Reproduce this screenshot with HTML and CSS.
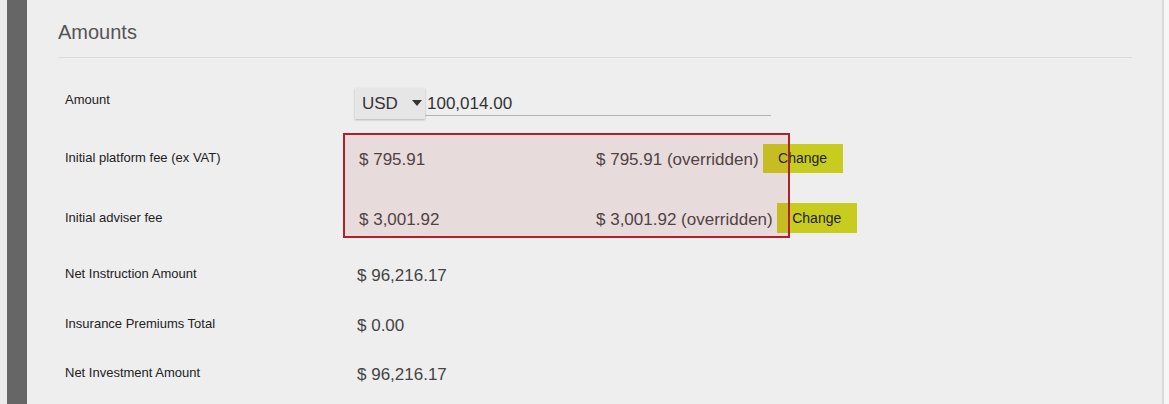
FILE: index.html
```html
<!DOCTYPE html>
<html>
<head>
<meta charset="utf-8">
<link rel="stylesheet" href="styles.css">
</head>
<body>
<div class="page">
  <div class="edge"></div>
  <div class="rail"></div>
  <main class="panel">
    <h2 class="title">Amounts</h2>
    <div class="rows">
      <div class="row row-amount">
        <div class="label">Amount</div>
        <div class="value amount-field">
          <div class="select">
            <span>USD</span>
            <svg class="caret" width="10" height="6" viewBox="0 0 10 6"><path d="M0 0H10L5 6Z" fill="#333"/></svg>
          </div>
          <div class="input">100,014.00</div>
        </div>
      </div>
      <div class="row row-fee1">
        <div class="label">Initial platform fee (ex VAT)</div>
        <div class="value fee">
          <span class="fee-default">$ 795.91</span>
          <span class="fee-over">$ 795.91 (overridden)</span>
          <button class="change">Change</button>
        </div>
      </div>
      <div class="row row-fee2">
        <div class="label">Initial adviser fee</div>
        <div class="value fee">
          <span class="fee-default">$ 3,001.92</span>
          <span class="fee-over">$ 3,001.92 (overridden)</span>
          <button class="change">Change</button>
        </div>
      </div>
      <div class="row row-net">
        <div class="label">Net Instruction Amount</div>
        <div class="value">$ 96,216.17</div>
      </div>
      <div class="row row-ins">
        <div class="label">Insurance Premiums Total</div>
        <div class="value">$ 0.00</div>
      </div>
      <div class="row row-inv">
        <div class="label">Net Investment Amount</div>
        <div class="value">$ 96,216.17</div>
      </div>
    </div>
    <div class="highlight"></div>
  </main>
  <div class="rborder"></div>
  <div class="redge"></div>
</div>
</body>
</html>
```

FILE: styles.css
```css
html, body {
  margin: 0;
  padding: 0;
  height: 404px;
  overflow: hidden;
  background: #f4f4f4;
  font-family: "Liberation Sans", Arial, sans-serif;
}

.page {
  display: flex;
  height: 404px;
}

.edge {
  width: 7px;
  background: #ebebeb;
}

.rail {
  width: 20px;
  background: #666666;
}

.panel {
  flex: 1;
  position: relative;
  background: #eeeeee;
  padding: 18px 30px 0 31px;
}

.rborder {
  width: 2px;
  background: #dadada;
}

.redge {
  width: 5px;
  background: #f6f6f6;
}

.title {
  margin: 0;
  font-size: 20px;
  line-height: 28px;
  font-weight: normal;
  color: #555555;
  padding-bottom: 11px;
  border-bottom: 1px solid #dcdcdc;
}

.rows {
  padding: 20px 0 0 7px;
}

.row {
  display: flex;
  align-items: center;
}

.row-amount { height: 50px; }
.row-fee1 { height: 60px; margin-top: 2px; }
.row-fee2 { height: 60px; }
.row-net { height: 52px; }
.row-ins { height: 48px; }
.row-inv { height: 50px; }

.label {
  width: 290px;
  flex: none;
  font-size: 13px;
  color: #222222;
  margin-bottom: 5px;
}

.row-amount .label {
  margin-bottom: 7px;
}

.value {
  font-size: 17px;
  color: #444444;
  padding-left: 2px;
}

.amount-field {
  display: flex;
  align-items: stretch;
  padding-left: 0;
}

.select {
  width: 70px;
  height: 31px;
  box-sizing: border-box;
  display: flex;
  align-items: center;
  padding: 2px 0 0 7px;
  background: #e6e6e6;
  box-shadow: 0 1px 2px rgba(0, 0, 0, 0.25);
  font-size: 17px;
  color: #333333;
}

.caret {
  margin: 0 0 2px 14px;
}

.input {
  width: 346px;
  padding-left: 2px;
  padding-bottom: 1px;
  border-bottom: 1px solid #b3b3b3;
  height: 28px;
  box-sizing: border-box;
  display: flex;
  align-items: flex-end;
  font-size: 17px;
  color: #333333;
}

.fee {
  display: flex;
  align-items: center;
  padding-left: 4px;
}

.fee-default {
  width: 237px;
}

.fee-over {
  white-space: nowrap;
}

.change {
  margin: 0 0 4px 4px;
  width: 80px;
  height: 29px;
  border: none;
  background: #c8cc1f;
  font-family: "Liberation Sans", Arial, sans-serif;
  font-size: 14px;
  color: #222222;
  padding: 0;
}

.row-fee2 .change {
  height: 30px;
}

.highlight {
  position: absolute;
  left: 316px;
  top: 133px;
  width: 447px;
  height: 105px;
  box-sizing: border-box;
  border: 2px solid #b0202a;
  background: rgba(188, 58, 68, 0.1);
}
```
